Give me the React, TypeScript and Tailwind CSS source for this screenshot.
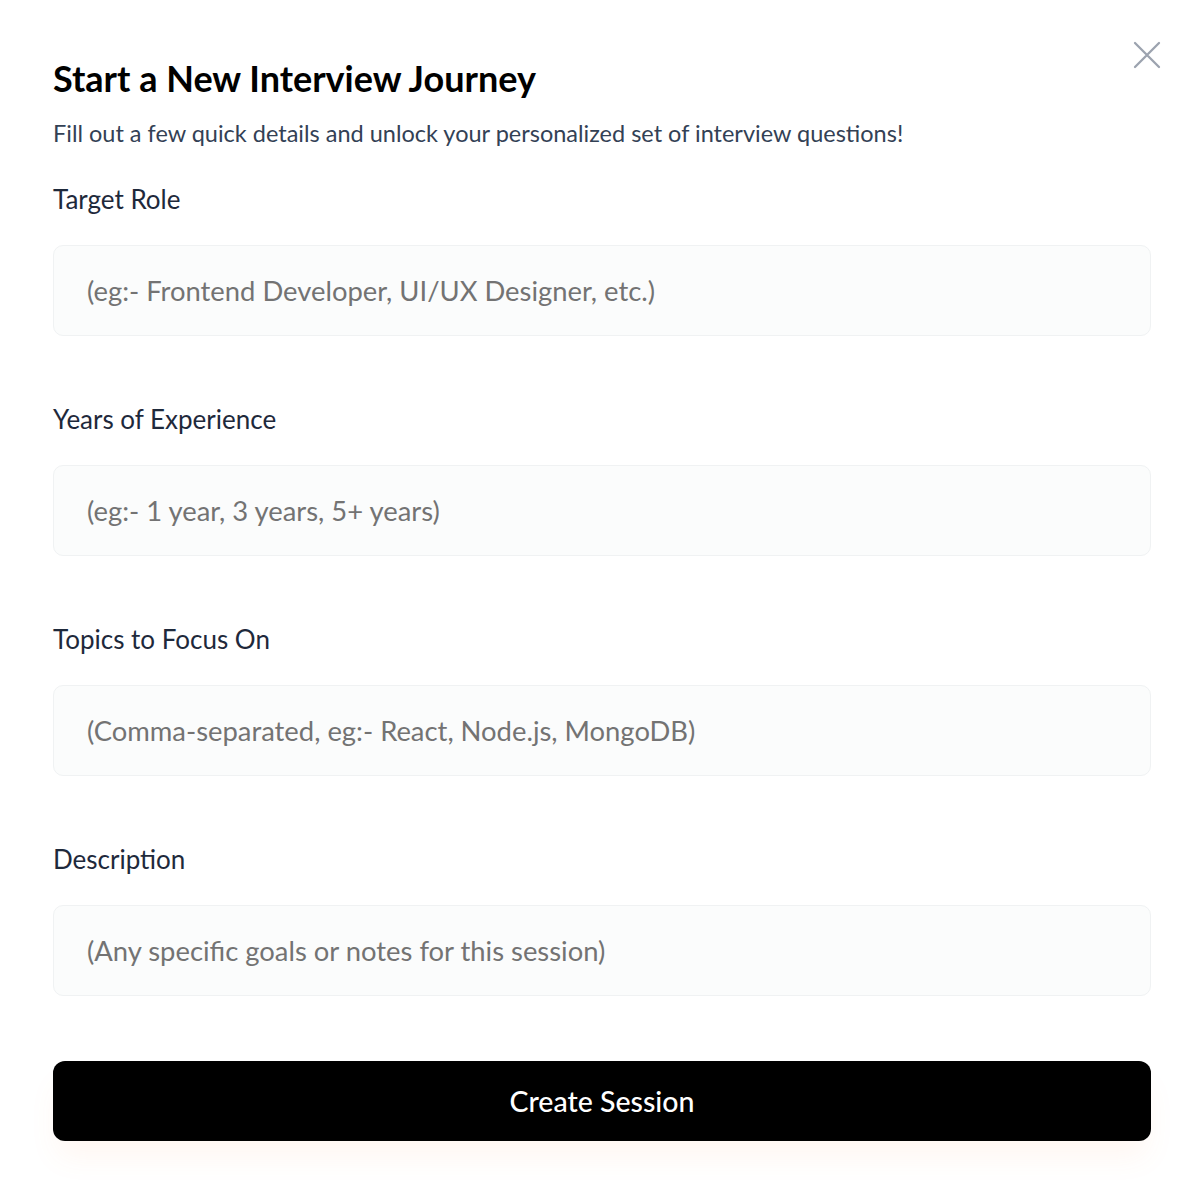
import React from 'react';

const fields = [
  { label: 'Target Role', placeholder: '(eg:- Frontend Developer, UI/UX Designer, etc.)' },
  { label: 'Years of Experience', placeholder: '(eg:- 1 year, 3 years, 5+ years)' },
  { label: 'Topics to Focus On', placeholder: '(Comma-separated, eg:- React, Node.js, MongoDB)' },
  { label: 'Description', placeholder: '(Any specific goals or notes for this session)' },
];

const CreateSessionForm: React.FC = () => {
  return (
    <div className="relative w-full min-h-[1196px] bg-white font-['Lato','Noto_Sans',sans-serif]">
      <button className="absolute top-[40px] right-[32px] w-[30px] h-[30px] flex items-center justify-center text-[#9ca3af]">
        <svg width="28" height="28" viewBox="0 0 28 28" fill="none" stroke="currentColor" strokeWidth="2.3" strokeLinecap="round">
          <path d="M2 2 L26 26 M26 2 L2 26" />
        </svg>
      </button>

      <div className="pl-[53px] pr-[43px] pt-[58px]">
        <h3 className="text-[36px] leading-[40px] font-bold text-black">Start a New Interview Journey</h3>
        <p className="mt-[20px] text-[23.5px] leading-[30px] text-[#334155]">
          Fill out a few quick details and unlock your personalized set of interview questions!
        </p>

        <form className="mt-[36px] flex flex-col">
          {fields.map((field, index) => (
            <div key={index} className={index > 0 ? 'mt-[68px]' : ''}>
              <label className="block text-[26px] leading-[30px] text-[#1e293b]">{field.label}</label>
              <input
                type="text"
                placeholder={field.placeholder}
                className="mt-[31px] w-full h-[91px] px-[33px] rounded-[10px] bg-[#fbfcfc] border-[1.5px] border-[#f0f2f3] text-[27.4px] text-black placeholder:text-[#737373] outline-none"
              />
            </div>
          ))}

          <button
            type="button"
            className="mt-[65px] w-full h-[80px] rounded-[12px] bg-black text-white text-[28.5px] font-medium shadow-[0_20px_30px_-5px_rgba(255,140,80,0.08)]"
          >
            Create Session
          </button>
        </form>
      </div>
    </div>
  );
};

export default function App() {
  return <CreateSessionForm />;
}
